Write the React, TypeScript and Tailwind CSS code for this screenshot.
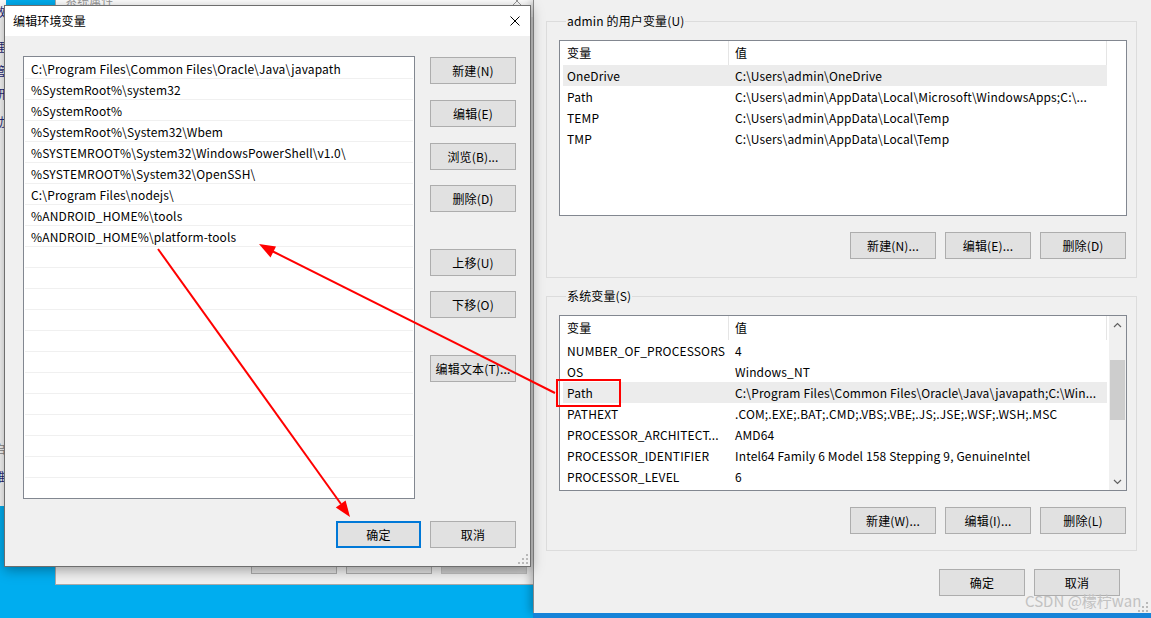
import React from 'react';

type Row = { name: string; value: string; selected?: boolean };

const userVars: Row[] = [
  { name: 'OneDrive', value: 'C:\\Users\\admin\\OneDrive', selected: true },
  { name: 'Path', value: 'C:\\Users\\admin\\AppData\\Local\\Microsoft\\WindowsApps;C:\\...' },
  { name: 'TEMP', value: 'C:\\Users\\admin\\AppData\\Local\\Temp' },
  { name: 'TMP', value: 'C:\\Users\\admin\\AppData\\Local\\Temp' },
];

const sysVars: Row[] = [
  { name: 'NUMBER_OF_PROCESSORS', value: '4' },
  { name: 'OS', value: 'Windows_NT' },
  { name: 'Path', value: 'C:\\Program Files\\Common Files\\Oracle\\Java\\javapath;C:\\Win...', selected: true },
  { name: 'PATHEXT', value: '.COM;.EXE;.BAT;.CMD;.VBS;.VBE;.JS;.JSE;.WSF;.WSH;.MSC' },
  { name: 'PROCESSOR_ARCHITECT...', value: 'AMD64' },
  { name: 'PROCESSOR_IDENTIFIER', value: 'Intel64 Family 6 Model 158 Stepping 9, GenuineIntel' },
  { name: 'PROCESSOR_LEVEL', value: '6' },
];

const pathEntries = [
  'C:\\Program Files\\Common Files\\Oracle\\Java\\javapath',
  '%SystemRoot%\\system32',
  '%SystemRoot%',
  '%SystemRoot%\\System32\\Wbem',
  '%SYSTEMROOT%\\System32\\WindowsPowerShell\\v1.0\\',
  '%SYSTEMROOT%\\System32\\OpenSSH\\',
  'C:\\Program Files\\nodejs\\',
  '%ANDROID_HOME%\\tools',
  '%ANDROID_HOME%\\platform-tools',
];

const allPathRows = [...pathEntries, ...Array(12).fill('')];

const WinButton: React.FC<{ label: string; className?: string; primary?: boolean }> = ({
  label,
  className = '',
  primary,
}) => (
  <div
    className={`h-[27px] flex items-center justify-center bg-[#e1e1e1] whitespace-nowrap ${
      primary ? 'border-2 border-[#0078d7]' : 'border border-[#adadad]'
    } ${className}`}
  >
    {label}
  </div>
);

const CloseIcon = ({ color = '#000' }: { color?: string }) => (
  <svg width="10" height="10" viewBox="0 0 10 10">
    <path d="M0.5 0.5 L9.5 9.5 M9.5 0.5 L0.5 9.5" stroke={color} strokeWidth="1" fill="none" />
  </svg>
);

const Grip = () => (
  <svg width="10" height="10" viewBox="0 0 10 10">
    <g fill="#b9b9b9">
      <rect x="8" y="0" width="2" height="2" />
      <rect x="4" y="4" width="2" height="2" />
      <rect x="8" y="4" width="2" height="2" />
      <rect x="0" y="8" width="2" height="2" />
      <rect x="4" y="8" width="2" height="2" />
      <rect x="8" y="8" width="2" height="2" />
    </g>
  </svg>
);

const ScrollBar = () => (
  <div className="w-[17px] bg-[#f0f0f0] flex flex-col">
    <div className="h-[17px] flex items-center justify-center">
      <svg width="9" height="6" viewBox="0 0 9 6">
        <polyline points="1,5 4.5,1.5 8,5" fill="none" stroke="#606060" strokeWidth="1.2" />
      </svg>
    </div>
    <div className="flex-1 flex flex-col">
      <div className="mt-[27px] h-[60px] mx-[1px] bg-[#cdcdcd]" />
    </div>
    <div className="h-[17px] flex items-center justify-center">
      <svg width="9" height="6" viewBox="0 0 9 6">
        <polyline points="1,1 4.5,4.5 8,1" fill="none" stroke="#606060" strokeWidth="1.2" />
      </svg>
    </div>
  </div>
);

const VarList: React.FC<{ rows: Row[]; scroll?: boolean }> = ({ rows, scroll }) => (
  <div className="h-[176px] border border-[#828790] bg-white flex overflow-hidden">
    <div className="flex-1 flex flex-col pl-[3px] overflow-hidden">
      <div className="h-[24px] flex shrink-0">
        <div className="w-[166px] pl-[4px] flex items-center border-r border-[#e5e5e5]">变量</div>
        <div className="w-[378px] pl-[6px] flex items-center border-r border-[#e5e5e5]">值</div>
      </div>
      {rows.map((r) => (
        <div
          key={r.name}
          className={`h-[21px] w-[544px] flex items-center shrink-0 ${r.selected ? 'bg-[#ececec]' : ''}`}
        >
          <div className="w-[166px] pl-[4px] leading-[16px] whitespace-nowrap overflow-hidden">{r.name}</div>
          <div className="pl-[6px] leading-[16px] whitespace-nowrap">{r.value}</div>
        </div>
      ))}
    </div>
    {scroll && <ScrollBar />}
  </div>
);

const GroupBox: React.FC<{
  title: string;
  rows: Row[];
  scroll?: boolean;
  buttons: string[];
  className?: string;
}> = ({ title, rows, scroll, buttons, className = '' }) => (
  <fieldset className={`border border-[#dcdcdc] pl-[12px] pr-[9px] ${className}`}>
    <legend className="ml-[7px] px-[1px] leading-[16px]">{title}</legend>
    <div className="mt-[11px]">
      <VarList rows={rows} scroll={scroll} />
    </div>
    <div className="flex justify-end gap-[9px] pr-[1px] mt-[16px]">
      {buttons.map((b) => (
        <WinButton key={b} label={b} className="w-[86px]" />
      ))}
    </div>
  </fieldset>
);

export default function App() {
  return (
    <div className="relative w-[1151px] h-[618px] overflow-hidden bg-[#00adef] font-['Noto_Sans_CJK_SC',sans-serif] text-[12px] tracking-[0.15px] leading-none text-black">
      {/* window far behind, only a sliver shows on the left */}
      <div className="absolute left-[-42px] top-0 w-[48px] h-[506px] bg-[#f9f9f9] flex flex-col items-end text-[#1e2a78]">
        <div className="mt-[4px] h-[16px] leading-[16px]">数</div>
        <div className="mt-[19px] h-[16px] leading-[16px]">理</div>
        <div className="mt-[8px] h-[16px] leading-[16px]">管</div>
        <div className="mt-[7px] h-[16px] leading-[16px]">研</div>
        <div className="mt-[12px] h-[16px] leading-[16px]">动</div>
        <div className="mt-[311px] h-[16px] leading-[16px] text-[#888]">启</div>
        <div className="mt-[12px] h-[16px] leading-[16px]">维</div>
      </div>

      {/* 系统属性 window */}
      <div className="absolute left-[55px] top-[-16px] w-[490px] h-[601px] border border-[#aaaaaa] bg-[#f0f0f0] flex flex-col">
        <div className="h-[32px] bg-white flex items-center justify-between pl-[9px] pr-[22px] text-[#999]">
          <span>系统属性</span>
          <CloseIcon color="#999" />
        </div>
        <div className="flex-1 flex flex-col justify-end pb-[10px]">
          <div className="flex gap-[9px] pl-[195px]">
            <div className="w-[86px] h-[23px] bg-[#e1e1e1] border border-[#adadad]" />
            <div className="w-[86px] h-[23px] bg-[#e1e1e1] border border-[#adadad]" />
            <div className="w-[86px] h-[23px] bg-[#cccccc] border border-[#bfbfbf]" />
          </div>
        </div>
      </div>

      {/* 环境变量 window */}
      <div className="absolute left-[533px] top-0 w-[618px] h-[613px] bg-[#f0f0f0] border-l border-[#8a8a8a] shadow-[-3px_0_8px_rgba(0,0,0,0.25)] pt-[13px] pl-[12px] pr-[14px] flex flex-col">
        <GroupBox
          title="admin 的用户变量(U)"
          rows={userVars}
          buttons={['新建(N)...', '编辑(E)...', '删除(D)']}
          className="pb-[18px]"
        />
        <GroupBox
          title="系统变量(S)"
          rows={sysVars}
          scroll
          buttons={['新建(W)...', '编辑(I)...', '删除(L)']}
          className="mt-[10px] pb-[16px]"
        />
        <div className="flex justify-end gap-[9px] pr-[17px] mt-[18px]">
          <WinButton label="确定" className="w-[86px]" />
          <WinButton label="取消" className="w-[86px]" />
        </div>
        <div className="absolute right-[3px] bottom-[1px]">
          <Grip />
        </div>
      </div>
      <div className="absolute left-[533px] top-[613px] w-[618px] h-[5px] bg-[#1683d8]" />

      {/* 编辑环境变量 dialog */}
      <div className="absolute left-[4px] top-[5px] w-[527px] h-[562px] border border-[#6e6e6e] bg-[#f0f0f0] shadow-[0_3px_12px_rgba(0,0,0,0.35)] flex flex-col">
        <div className="h-[30px] bg-white flex items-center justify-between pl-[8px] pr-[10px] shrink-0">
          <span>编辑环境变量</span>
          <CloseIcon />
        </div>
        <div className="relative flex-1 flex flex-col pl-[18px] pt-[20px]">
          <div className="flex">
            <div className="w-[392px] h-[443px] border border-[#828790] bg-white flex flex-col pt-[1px] overflow-hidden">
              {allPathRows.map((p, i) => (
                <div
                  key={i}
                  className="h-[21px] mx-[1px] shrink-0 border-b border-[#f0f0f0] flex items-center pl-[6px] pt-[1px] leading-[16px] whitespace-nowrap"
                >
                  {p}
                </div>
              ))}
            </div>
            <div className="ml-[15px] mt-[1px] flex flex-col">
              <WinButton label="新建(N)" className="w-[86px]" />
              <WinButton label="编辑(E)" className="w-[86px] mt-[16px]" />
              <WinButton label="浏览(B)..." className="w-[86px] mt-[16px]" />
              <WinButton label="删除(D)" className="w-[86px] mt-[15px]" />
              <WinButton label="上移(U)" className="w-[86px] mt-[37px]" />
              <WinButton label="下移(O)" className="w-[86px] mt-[15px]" />
              <WinButton label="编辑文本(T)..." className="w-[86px] mt-[37px] overflow-hidden" />
            </div>
          </div>
          <div className="flex justify-end gap-[9px] pr-[14px] mt-[22px]">
            <WinButton label="确定" primary className="w-[85px]" />
            <WinButton label="取消" className="w-[86px]" />
          </div>
          <div className="absolute right-[2px] bottom-[2px]">
            <Grip />
          </div>
        </div>
      </div>

      {/* watermark */}
      <div className="absolute left-[1025px] top-[593px] text-[15px] leading-[16px] tracking-normal text-[#c2c2c2] whitespace-nowrap">
        CSDN @檬柠wan
      </div>

      {/* red annotations */}
      <svg className="absolute inset-0 pointer-events-none" width="1151" height="618" viewBox="0 0 1151 618">
        <rect x="557" y="380" width="63" height="26" fill="none" stroke="#ff0000" strokeWidth="2" />
        <line x1="555" y1="393" x2="272" y2="251" stroke="#ff0000" strokeWidth="2" />
        <polygon points="259,244 276,246.5 270.5,257.5" fill="#ff0000" />
        <line x1="158" y1="249" x2="341" y2="504" stroke="#ff0000" strokeWidth="2" />
        <polygon points="350,517 345.6,500.5 335.8,507.5" fill="#ff0000" />
      </svg>
    </div>
  );
}
